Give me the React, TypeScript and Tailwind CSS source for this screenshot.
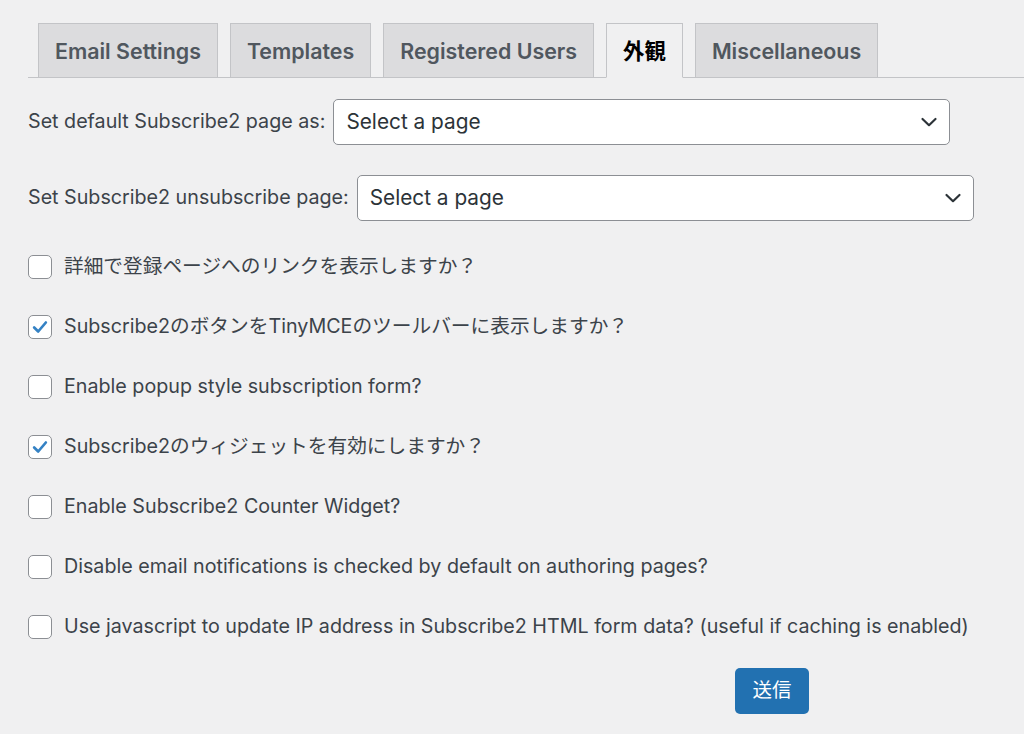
import { useState } from 'react'

const FONT = 'font-["Inter","Noto_Sans_CJK_JP",sans-serif]'

const tabs = ['Email Settings', 'Templates', 'Registered Users', '外観', 'Miscellaneous']

const options = [
  { label: '詳細で登録ページへのリンクを表示しますか？', checked: false },
  { label: 'Subscribe2のボタンをTinyMCEのツールバーに表示しますか？', checked: true },
  { label: 'Enable popup style subscription form?', checked: false },
  { label: 'Subscribe2のウィジェットを有効にしますか？', checked: true },
  { label: 'Enable Subscribe2 Counter Widget?', checked: false },
  { label: 'Disable email notifications is checked by default on authoring pages?', checked: false },
  { label: 'Use javascript to update IP address in Subscribe2 HTML form data? (useful if caching is enabled)', checked: false },
]

function Chevron() {
  return (
    <svg width="20" height="20" viewBox="0 0 20 20" fill="none" className="shrink-0">
      <path d="M3.5 7 10 13.2 16.5 7" stroke="#2c3338" strokeWidth="2.2" strokeLinecap="round" strokeLinejoin="round" />
    </svg>
  )
}

function PageSelect({ width }: { width: string }) {
  return (
    <div className={`${width} h-[46px] flex items-center justify-between bg-white border border-[#8c8f94] rounded-[5px] pl-[12px] pr-[10px]`}>
      <span className="text-[20.8px] text-[#2c3338]">Select a page</span>
      <Chevron />
    </div>
  )
}

function Checkbox({ checked, onChange }: { checked: boolean; onChange: () => void }) {
  return (
    <button
      onClick={onChange}
      className="w-[24px] h-[24px] shrink-0 bg-white border border-[#8c8f94] rounded-[5px] flex items-center justify-center"
    >
      {checked && (
        <svg width="18" height="18" viewBox="0 0 20 20">
          <path d="M3.5 10.5 8 15l8.5-10" stroke="#3582c4" strokeWidth="3" fill="none" strokeLinecap="round" strokeLinejoin="round" />
        </svg>
      )}
    </button>
  )
}

export default function App() {
  const [active, setActive] = useState(3)
  const [checks, setChecks] = useState(options.map(o => o.checked))

  return (
    <div className={`w-[1024px] h-[734px] bg-[#f0f0f1] overflow-hidden ${FONT}`}>
      {/* Tabs */}
      <div className="pt-[23px] pl-[28px]">
        <div className="flex items-end gap-[12px] pl-[10px] border-b border-[#c3c4c7] h-[55px]">
          {tabs.map((t, i) => (
            <button
              key={t}
              onClick={() => setActive(i)}
              className={`h-[55px] -mb-px px-[16px] pt-[2px] border border-[#c3c4c7] text-[21.4px] font-semibold ${
                i === active
                  ? 'bg-[#f0f0f1] border-b-[#f0f0f1] text-black'
                  : 'bg-[#dcdcde] text-[#50575e]'
              }`}
            >
              {t}
            </button>
          ))}
        </div>
      </div>

      {/* Page selects */}
      <div className="pl-[28px] pt-[21px] text-[#3c434a]">
        <div className="flex items-center gap-[8px]">
          <span className="text-[19.7px]">Set default Subscribe2 page as:</span>
          <PageSelect width="w-[617px]" />
        </div>
        <div className="flex items-center gap-[8px] mt-[30px]">
          <span className="text-[19.7px]">Set Subscribe2 unsubscribe page:</span>
          <PageSelect width="w-[617px]" />
        </div>

        {/* Checkbox options */}
        <div className="flex flex-col gap-[36px] mt-[34px]">
          {options.map((o, i) => (
            <label key={o.label} className="flex items-center gap-[12px] h-[24px]">
              <Checkbox
                checked={checks[i]}
                onChange={() => setChecks(c => c.map((v, j) => (j === i ? !v : v)))}
              />
              <span className="text-[19.7px] whitespace-nowrap">{o.label}</span>
            </label>
          ))}
        </div>

        <div className="mt-[29px] pl-[707px]">
          <button className="w-[74px] h-[46px] bg-[#2271b1] text-white text-[19.5px] rounded-[5px]">送信</button>
        </div>
      </div>
    </div>
  )
}
